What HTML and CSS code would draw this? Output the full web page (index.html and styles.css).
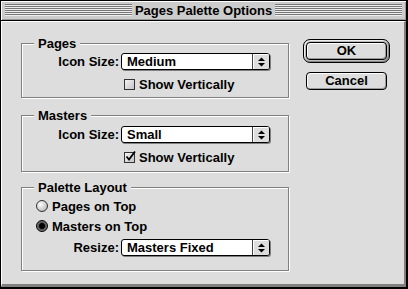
FILE: index.html
```html
<!DOCTYPE html>
<html lang="en">
<head>
    <meta charset="UTF-8">
    <title>Pages Palette Options</title>
    <link rel="stylesheet" href="styles.css">
</head>
<body>
    <div class="window">
        <div class="titlebar">
            <div class="stripes"></div>
            <div class="title">Pages Palette Options</div>
            <div class="stripes"></div>
        </div>
        <div class="content">
            <div class="groups">
                <div class="group">
                    <span class="legend">Pages</span>
                    <div class="row">
                        <span class="label">Icon Size:</span>
                        <div class="popup">
                            <span class="popup-value">Medium</span>
                            <span class="popup-arrows">
                                <svg width="7" height="10" viewBox="0 0 7 10"><polygon points="0,4 7,4 3.5,0.5"/><polygon points="0,6 7,6 3.5,9.5"/></svg>
                            </span>
                        </div>
                    </div>
                    <div class="row check-row">
                        <span class="checkbox"></span>
                        <span>Show Vertically</span>
                    </div>
                </div>

                <div class="group group-masters">
                    <span class="legend">Masters</span>
                    <div class="row">
                        <span class="label">Icon Size:</span>
                        <div class="popup">
                            <span class="popup-value">Small</span>
                            <span class="popup-arrows">
                                <svg width="7" height="10" viewBox="0 0 7 10"><polygon points="0,4 7,4 3.5,0.5"/><polygon points="0,6 7,6 3.5,9.5"/></svg>
                            </span>
                        </div>
                    </div>
                    <div class="row check-row">
                        <span class="checkbox checked">
                            <svg width="13" height="13" viewBox="0 0 13 13"><path d="M2.5 6.5 L5 9.5 L11 1.5" fill="none" stroke="#000" stroke-width="1.8"/></svg>
                        </span>
                        <span>Show Vertically</span>
                    </div>
                </div>

                <div class="group group-layout">
                    <span class="legend">Palette Layout</span>
                    <div class="row radio-row">
                        <span class="radio"></span>
                        <span>Pages on Top</span>
                    </div>
                    <div class="row radio-row">
                        <span class="radio selected"></span>
                        <span>Masters on Top</span>
                    </div>
                    <div class="row resize-row">
                        <span class="label">Resize:</span>
                        <div class="popup">
                            <span class="popup-value">Masters Fixed</span>
                            <span class="popup-arrows">
                                <svg width="7" height="10" viewBox="0 0 7 10"><polygon points="0,4 7,4 3.5,0.5"/><polygon points="0,6 7,6 3.5,9.5"/></svg>
                            </span>
                        </div>
                    </div>
                </div>
            </div>

            <div class="buttons">
                <div class="default-ring">
                    <div class="button">OK</div>
                </div>
                <div class="button cancel">Cancel</div>
            </div>
        </div>
    </div>
</body>
</html>
```

FILE: styles.css
```css
body {
    margin: 0;
    font-family: 'Liberation Sans', Arial, sans-serif;
    font-size: 13px;
    font-weight: bold;
    color: #000;
}

.window {
    width: 408px;
    height: 289px;
    box-sizing: border-box;
    border-top: 1px solid #000;
    border-left: 1px solid #000;
    border-right: 2px solid #000;
    border-bottom: 2px solid #000;
    background-color: #dddddd;
}

.titlebar {
    height: 19px;
    border-bottom: 1px solid #000;
    background-color: #cccccc;
    box-shadow: inset 1px 1px 0 #ffffff, inset -1px -1px 0 #999999;
    display: flex;
    align-items: flex-start;
    padding: 0 4px;
}

.stripes {
    flex: 1;
    height: 12px;
    margin-top: 3px;
    background: repeating-linear-gradient(to bottom, #777777 0, #777777 1px, #eeeeee 1px, #eeeeee 2px);
}

.title {
    padding: 0 3px;
    line-height: 19px;
    white-space: nowrap;
}

.content {
    height: 266px;
    box-sizing: border-box;
    border-top: 1px solid #ffffff;
    border-left: 1px solid #ffffff;
    border-right: 2px solid #808080;
    border-bottom: 3px solid #808080;
    padding: 16px 0 0 19px;
    display: flex;
    gap: 14px;
}

.groups {
    padding-top: 5px;
    width: 268px;
}

.group {
    position: relative;
    border: 1px solid #808080;
    box-shadow: 1px 1px 0 #ffffff, inset 1px 1px 0 #ffffff;
    padding: 9px 0 5px 0;
    margin-bottom: 17px;
}

.group-masters {
    padding: 10px 0 6px 0;
}

.group-layout {
    margin-top: -2px;
    padding: 10px 0 14px 0;
}

.legend {
    position: absolute;
    top: -8px;
    left: 12px;
    padding: 0 4px;
    line-height: 15px;
    background-color: #dddddd;
}

.row {
    display: flex;
    align-items: center;
    height: 17px;
}

.label {
    width: 97px;
    margin-right: 2px;
    text-align: right;
}

.popup {
    width: 149px;
    height: 17px;
    box-sizing: border-box;
    border: 1px solid #000;
    border-radius: 3px;
    background-color: #ffffff;
    box-shadow: 1px 1px 0 #808080;
    display: flex;
    overflow: hidden;
}

.popup-value {
    flex: 1;
    padding-left: 5px;
    line-height: 15px;
}

.popup-arrows {
    width: 16px;
    border-left: 1px solid #444444;
    background-color: #dddddd;
    box-shadow: inset 1px 1px 0 #ffffff;
    display: flex;
    align-items: center;
    justify-content: center;
}

.check-row {
    height: 16px;
    margin-top: 6px;
    padding-left: 102px;
}

.checkbox {
    position: relative;
    width: 11px;
    height: 11px;
    box-sizing: border-box;
    border: 1px solid #333333;
    background: linear-gradient(135deg, #f4f4f4, #c4c4c4);
    margin-right: 4px;
}

.checkbox svg {
    position: absolute;
    left: -1px;
    top: -3px;
}

.radio-row {
    height: 16px;
    padding-left: 14px;
}

.radio-row + .radio-row {
    margin-top: 4px;
}

.radio {
    width: 12px;
    height: 12px;
    box-sizing: border-box;
    border: 1px solid #333333;
    border-radius: 50%;
    background: radial-gradient(circle at 35% 35%, #ffffff 0, #e0e0e0 35%, #a8a8a8 100%);
    margin-right: 4px;
}

.radio.selected {
    border-color: #000;
    background: radial-gradient(circle at 50% 50%, #000 0, #000 2.6px, #555555 3.4px, #9a9a9a 100%);
}

.resize-row {
    margin-top: 5px;
}

.buttons {
    display: flex;
    flex-direction: column;
    align-items: flex-start;
    padding-top: 1px;
}

.default-ring {
    width: 87px;
    height: 24px;
    box-sizing: border-box;
    border: 1px solid #000;
    border-radius: 7px;
    padding: 2px;
    background-color: #bbbbbb;
    box-shadow: inset 1px 1px 0 #eeeeee, inset -1px -1px 0 #888888;
}

.button {
    width: 81px;
    height: 18px;
    box-sizing: border-box;
    border: 1px solid #000;
    border-radius: 4px;
    background-color: #dddddd;
    box-shadow: inset 1px 1px 0 #ffffff, inset -1px -1px 0 #999999;
    text-align: center;
    line-height: 16px;
}

.cancel {
    margin-top: 9px;
    margin-left: 3px;
}
```
